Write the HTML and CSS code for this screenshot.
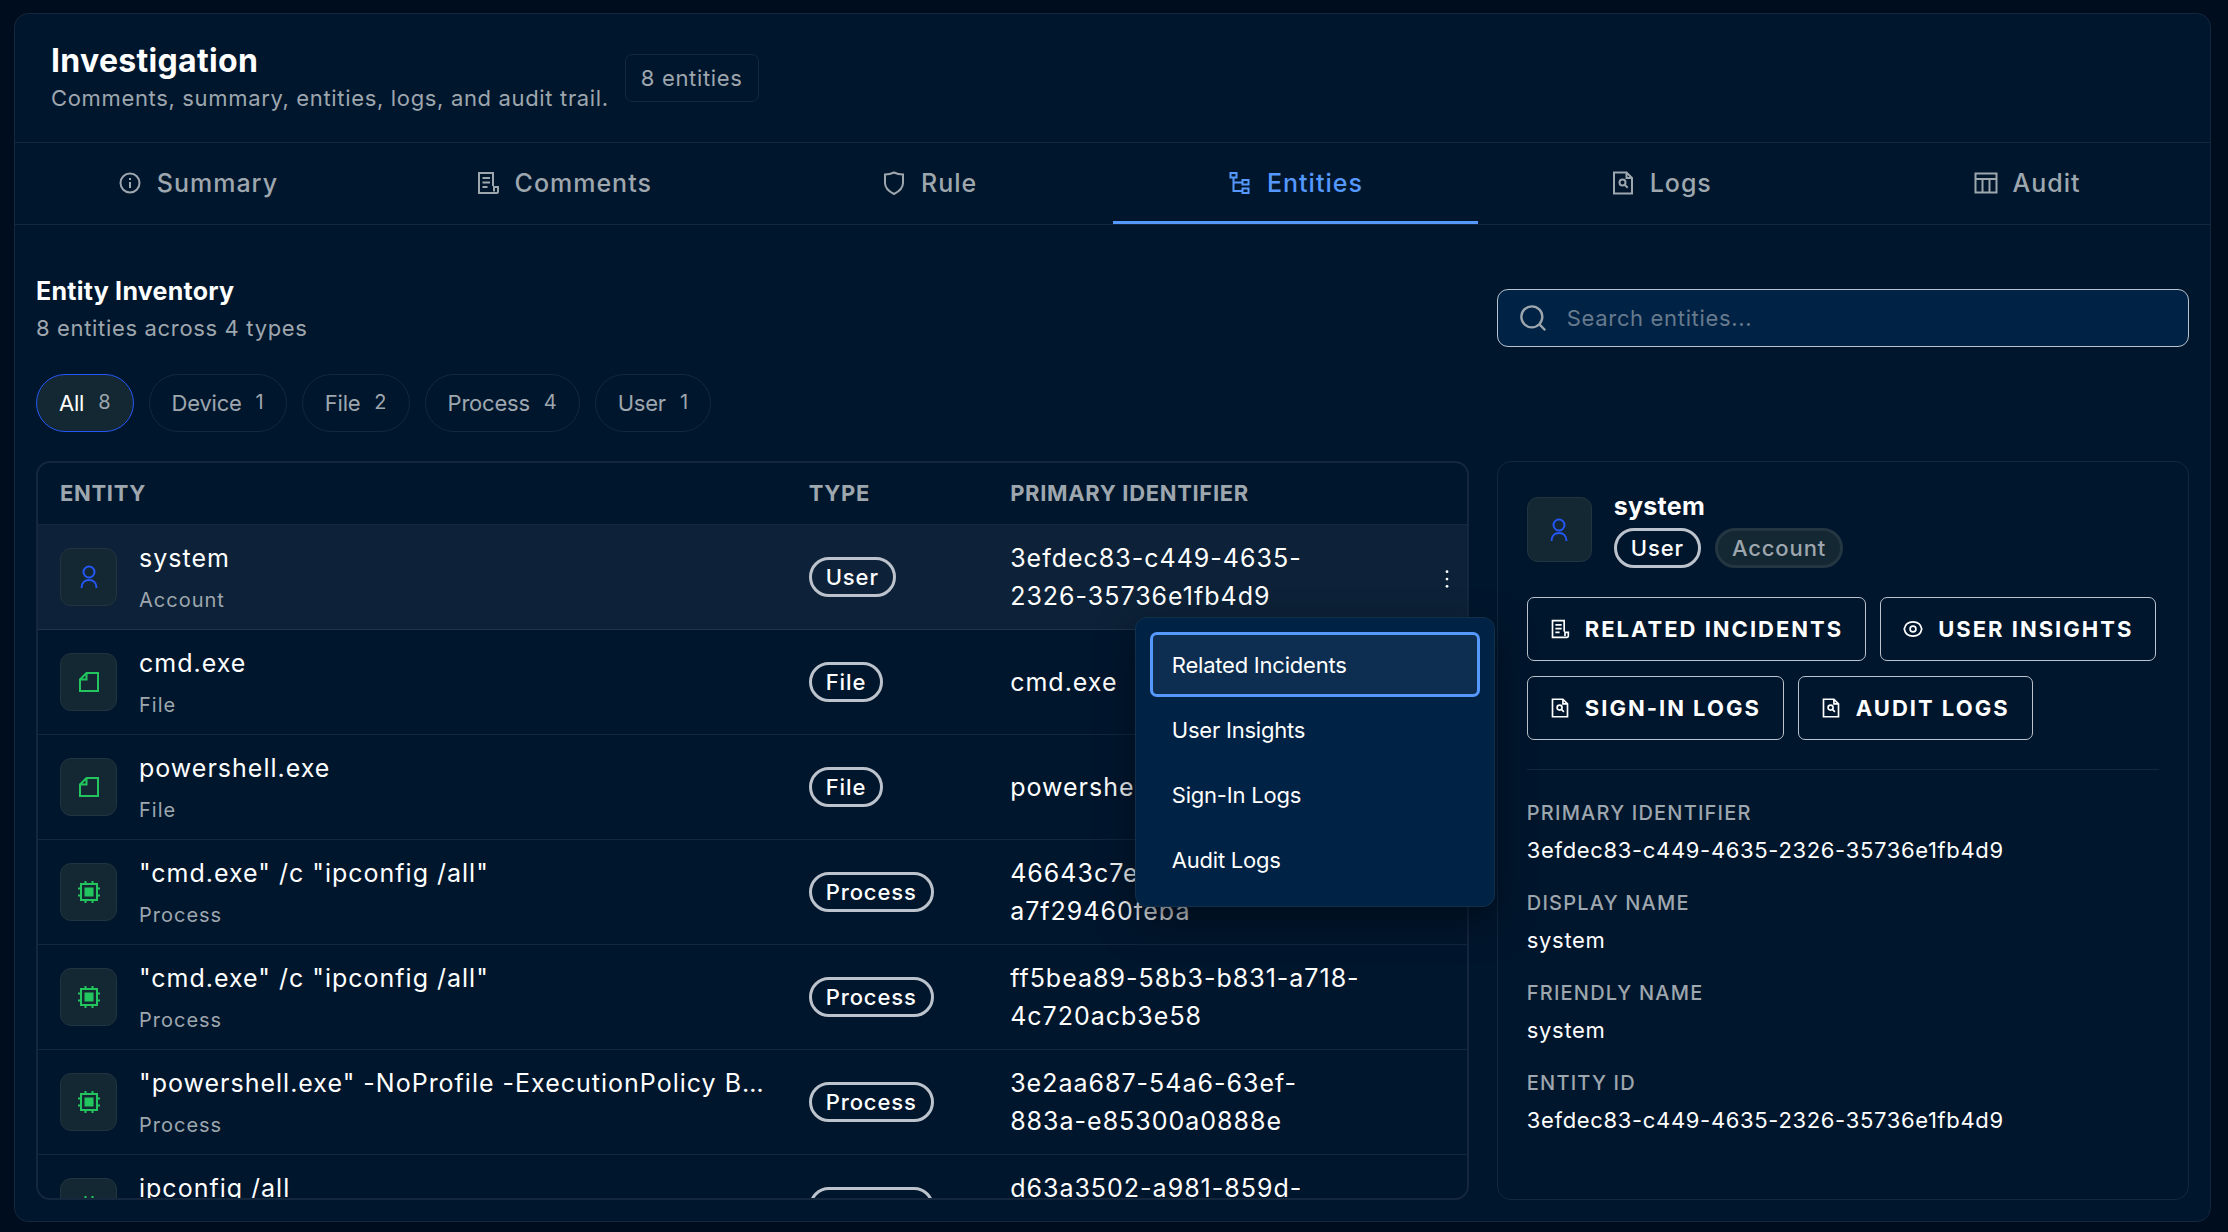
FILE: index.html
```html
<!DOCTYPE html>
<html lang="en">
  <head>
    <meta charset="UTF-8">
    <meta name="viewport" content="width=device-width, initial-scale=1.0">
    <title>Investigation</title>
    <link rel="stylesheet" href="styles.css">
  </head>
  <body>
    <!-- Icons -->
    <svg class="sprite" aria-hidden="true">
      <symbol id="i-info" viewBox="0 0 24 24">
        <circle cx="12" cy="12" r="9.5"/><path d="M12 11v6M12 7v2"/>
      </symbol>
      <symbol id="i-note" viewBox="0 0 24 24">
        <path d="M17 15V2H3v20h17.500a1.500 1.500 0 0 0 1.500-1.500V16h-4v4.500M6.500 7h7.500M6.500 11.500h7.500M6.500 16h5"/>
      </symbol>
      <symbol id="i-shield" viewBox="0 0 24 24">
        <path d="M12 1.500c3 1.500 6 2 9 2V12c0 5-4 8.500-9 11-5-2.500-9-6-9-11V3.500c3 0 6-.500 9-2z"/>
      </symbol>
      <symbol id="i-tree" viewBox="0 0 24 24">
        <path d="M2.500 2h6v4.500h-6zM14.500 9h6v4.500h-6zM14.500 17.500h6V22h-6zM5.500 6.500V20h9M5.500 11.500h9"/>
      </symbol>
      <symbol id="i-log" viewBox="0 0 24 24">
        <path d="M3 1.500h12.500L21 7v15.500H3zM15.500 1.500V7H21"/><circle cx="11.500" cy="11.500" r="3"/><path d="M13.700 13.700l3 3"/>
      </symbol>
      <symbol id="i-table" viewBox="0 0 24 24">
        <path d="M1.500 2.500h21v19h-21zM1.500 8h21M8.500 8v13.500M15.500 8v13.500"/>
      </symbol>
      <symbol id="i-search" viewBox="0 0 24 24">
        <circle cx="11" cy="11" r="9"/><path d="M17.500 17.500L22.500 22.500"/>
      </symbol>
      <symbol id="i-user" viewBox="0 0 24 24">
        <circle cx="12" cy="7" r="5.500"/><path d="M4.500 23c0-5 3-8 7.500-8s7.500 3 7.500 8"/>
      </symbol>
      <symbol id="i-file" viewBox="0 0 24 24">
        <path d="M9.500 3H21v18H3V9.500zM9.500 3v6.500H3"/>
      </symbol>
      <symbol id="i-cpu" viewBox="0 0 24 24">
        <path d="M4 4h16v16H4zM8.500 1v3M15.500 1v3M8.500 20v3M15.500 20v3M1 8.500h3M1 15.500h3M20 8.500h3M20 15.500h3"/>
        <path class="solid" d="M8.500 8.500h7v7h-7z"/>
      </symbol>
      <symbol id="i-eye" viewBox="0 0 24 24">
        <path d="M1.500 12c1-5 5-8.500 10.500-8.500S21.500 7 22.500 12c-1 5-5 8.500-10.500 8.500S2.500 17 1.500 12z"/><circle cx="12" cy="12" r="3.500"/>
      </symbol>
      <symbol id="i-dots" viewBox="0 0 24 24">
        <g class="dots"><circle cx="12" cy="4" r="1.500"/><circle cx="12" cy="12" r="1.500"/><circle cx="12" cy="20" r="1.500"/></g>
      </symbol>
    </svg>

    <main class="panel">
      <header class="panel-header">
        <div class="panel-title">
          <h1>Investigation</h1>
          <p class="muted">Comments, summary, entities, logs, and audit trail.</p>
        </div>
        <span class="count-badge">8 entities</span>
      </header>

      <nav class="tabs" role="tablist">
        <button class="tab" role="tab"><svg class="icon"><use href="#i-info"/></svg>Summary</button>
        <button class="tab" role="tab"><svg class="icon"><use href="#i-note"/></svg>Comments</button>
        <button class="tab" role="tab"><svg class="icon"><use href="#i-shield"/></svg>Rule</button>
        <button class="tab active" role="tab" aria-selected="true"><svg class="icon"><use href="#i-tree"/></svg>Entities</button>
        <button class="tab" role="tab"><svg class="icon"><use href="#i-log"/></svg>Logs</button>
        <button class="tab" role="tab"><svg class="icon"><use href="#i-table"/></svg>Audit</button>
      </nav>

      <section class="content">
        <div class="toolbar columns">
          <div>
            <h2>Entity Inventory</h2>
            <p class="muted">8 entities across 4 types</p>
          </div>
          <label class="search">
            <svg class="icon"><use href="#i-search"/></svg>
            <input type="text" placeholder="Search entities..." aria-label="Search entities">
          </label>
        </div>

        <div class="filters">
          <button class="chip active">All <span>8</span></button>
          <button class="chip">Device <span>1</span></button>
          <button class="chip">File <span>2</span></button>
          <button class="chip">Process <span>4</span></button>
          <button class="chip">User <span>1</span></button>
        </div>

        <div class="columns body-columns">
          <div class="inventory">
            <div class="table-wrap">
              <table>
                <colgroup>
                  <col class="col-entity"><col class="col-type"><col class="col-id"><col>
                </colgroup>
                <thead>
                  <tr><th>Entity</th><th>Type</th><th>Primary Identifier</th><th></th></tr>
                </thead>
                <tbody>
                  <tr class="selected">
                    <td><div class="entity"><span class="tile user"><svg class="icon"><use href="#i-user"/></svg></span><div><div class="name">system</div><div class="kind">Account</div></div></div></td>
                    <td><span class="pill">User</span></td>
                    <td>3efdec83-c449-4635-2326-35736e1fb4d9</td>
                    <td class="actions"><button class="kebab" aria-label="Entity actions"><svg class="icon"><use href="#i-dots"/></svg></button></td>
                  </tr>
                  <tr>
                    <td><div class="entity"><span class="tile"><svg class="icon"><use href="#i-file"/></svg></span><div><div class="name">cmd.exe</div><div class="kind">File</div></div></div></td>
                    <td><span class="pill">File</span></td>
                    <td>cmd.exe</td>
                    <td></td>
                  </tr>
                  <tr>
                    <td><div class="entity"><span class="tile"><svg class="icon"><use href="#i-file"/></svg></span><div><div class="name">powershell.exe</div><div class="kind">File</div></div></div></td>
                    <td><span class="pill">File</span></td>
                    <td>powershell.exe</td>
                    <td></td>
                  </tr>
                  <tr>
                    <td><div class="entity"><span class="tile"><svg class="icon"><use href="#i-cpu"/></svg></span><div><div class="name">"cmd.exe" /c "ipconfig /all"</div><div class="kind">Process</div></div></div></td>
                    <td><span class="pill">Process</span></td>
                    <td>46643c7e-1f1b-b131-a711-a7f29460feba</td>
                    <td></td>
                  </tr>
                  <tr>
                    <td><div class="entity"><span class="tile"><svg class="icon"><use href="#i-cpu"/></svg></span><div><div class="name">"cmd.exe" /c "ipconfig /all"</div><div class="kind">Process</div></div></div></td>
                    <td><span class="pill">Process</span></td>
                    <td>ff5bea89-58b3-b831-a718-4c720acb3e58</td>
                    <td></td>
                  </tr>
                  <tr>
                    <td><div class="entity"><span class="tile"><svg class="icon"><use href="#i-cpu"/></svg></span><div><div class="name">"powershell.exe" -NoProfile -ExecutionPolicy Bypass</div><div class="kind">Process</div></div></div></td>
                    <td><span class="pill">Process</span></td>
                    <td>3e2aa687-54a6-63ef-883a-e85300a0888e</td>
                    <td></td>
                  </tr>
                  <tr>
                    <td><div class="entity"><span class="tile"><svg class="icon"><use href="#i-cpu"/></svg></span><div><div class="name">ipconfig /all</div><div class="kind">Process</div></div></div></td>
                    <td><span class="pill">Process</span></td>
                    <td>d63a3502-a981-859d-8f20-6b0c94e2d7a4</td>
                    <td></td>
                  </tr>
                </tbody>
              </table>
            </div>

            <!-- Row action menu -->
            <div class="menu" role="menu">
              <button class="focused" role="menuitem">Related Incidents</button>
              <button role="menuitem">User Insights</button>
              <button role="menuitem">Sign-In Logs</button>
              <button role="menuitem">Audit Logs</button>
            </div>
          </div>

          <aside class="detail">
            <div class="detail-header">
              <span class="tile user large"><svg class="icon"><use href="#i-user"/></svg></span>
              <div>
                <h3>system</h3>
                <div class="pills"><span class="pill">User</span><span class="pill subtle">Account</span></div>
              </div>
            </div>
            <div class="detail-actions">
              <button><svg class="icon"><use href="#i-note"/></svg>Related Incidents</button>
              <button><svg class="icon"><use href="#i-eye"/></svg>User Insights</button>
              <button><svg class="icon"><use href="#i-log"/></svg>Sign-In Logs</button>
              <button><svg class="icon"><use href="#i-log"/></svg>Audit Logs</button>
            </div>
            <dl>
              <div><dt>Primary Identifier</dt><dd>3efdec83-c449-4635-2326-35736e1fb4d9</dd></div>
              <div><dt>Display Name</dt><dd>system</dd></div>
              <div><dt>Friendly Name</dt><dd>system</dd></div>
              <div><dt>Entity ID</dt><dd>3efdec83-c449-4635-2326-35736e1fb4d9</dd></div>
            </dl>
          </aside>
        </div>
      </section>
    </main>
  </body>
</html>
```
FILE: styles.css
```css
:root {
  --bg: #000d1f;
  --panel: #00162d;
  --raised: #002244;
  --tile: #142833;
  --line: #14273d;
  --text: #ffffff;
  --muted: #9ea6ae;
  --outline: #bcc3cc;
  --accent: #5599ff;
  --blue: #2457f5;
  --green: #22c55e;
}
* {
  box-sizing: border-box;
}
body {
  margin: 0;
  height: 100vh;
  padding: 13px 17px 10px 14px;
  display: flex;
  background-color: var(--bg);
  color: var(--text);
  font-family: Inter, "Liberation Sans", sans-serif;
  font-size: 22px;
  letter-spacing: 0.03em;
}
h1, h2, h3, p, dl, dd {
  margin: 0;
}
h1, h2, h3 {
  font-weight: 700;
  letter-spacing: 0.01em;
}
button, input {
  font: inherit;
  letter-spacing: inherit;
  color: inherit;
  background: none;
  border: none;
  padding: 0;
}
button {
  cursor: pointer;
}
.sprite {
  position: absolute;
  width: 0;
  height: 0;
}
.icon {
  width: 24px;
  height: 24px;
  flex-shrink: 0;
  fill: none;
  stroke: currentColor;
  stroke-width: 2;
}
.solid {
  fill: currentColor;
}
.dots {
  fill: currentColor;
  stroke: none;
}
.muted {
  color: var(--muted);
  line-height: 32px;
}

/* Panel */
.panel {
  flex: 1;
  min-width: 0;
  display: flex;
  flex-direction: column;
  background-color: var(--panel);
  border: 1px solid var(--line);
  border-radius: 14px;
}
.panel-header {
  display: flex;
  align-items: center;
  gap: 16px;
  height: 129px;
  padding: 0 36px;
  border-bottom: 1px solid var(--line);
}
.panel-title {
  padding-bottom: 3px;
}
h1 {
  font-size: 32px;
  line-height: 42px;
}
.count-badge {
  padding: 0 15px;
  line-height: 46px;
  color: var(--muted);
  border: 1px solid var(--line);
  border-radius: 7px;
}

/* Tabs */
.tabs {
  display: grid;
  grid-template-columns: repeat(6, 1fr);
  border-bottom: 1px solid var(--line);
}
.tab {
  display: flex;
  align-items: center;
  justify-content: center;
  gap: 15px;
  height: 81px;
  padding-top: 2px;
  font-size: 25px;
  font-weight: 500;
  letter-spacing: 1px;
  color: var(--muted);
  border-bottom: 3px solid transparent;
}
.tab.active {
  color: var(--accent);
  border-bottom-color: var(--accent);
}

/* Content */
.content {
  flex: 1;
  min-height: 0;
  display: flex;
  flex-direction: column;
  padding: 47px 21px 21px;
}
.columns {
  display: grid;
  grid-template-columns: minmax(0, 2.07fr) minmax(0, 1fr);
  gap: 28px;
}
.toolbar {
  align-items: end;
}
h2 {
  font-size: 25px;
  line-height: 38px;
}
.toolbar .muted {
  line-height: 37px;
}
.search {
  display: flex;
  align-items: center;
  gap: 20px;
  height: 58px;
  padding: 0 21px;
  color: var(--muted);
  background-color: var(--raised);
  border: 1px solid var(--outline);
  border-radius: 11px;
}
.search .icon {
  width: 28px;
  height: 28px;
}
.search input {
  flex: 1;
  min-width: 0;
  outline: none;
  color: var(--text);
}
.search input::placeholder {
  color: #677a8e;
}
.filters {
  display: flex;
  gap: 15px;
  margin: 27px 0 29px;
}
.chip {
  display: flex;
  align-items: center;
  gap: 14px;
  height: 58px;
  padding: 0 22px;
  letter-spacing: -0.01em;
  color: var(--muted);
  border: 1px solid var(--line);
  border-radius: 29px;
}
.chip span {
  font-size: 20px;
  letter-spacing: 0;
  color: var(--muted);
  padding-bottom: 2px;
}
.chip.active {
  color: var(--text);
  background-color: var(--tile);
  border-color: var(--blue);
}
.body-columns {
  flex: 1;
  min-height: 0;
}

/* Entity table */
.inventory {
  position: relative;
  min-height: 0;
}
.table-wrap {
  height: 100%;
  overflow-y: auto;
  scrollbar-width: none;
  border: 2px solid var(--line);
  border-radius: 14px;
}
table {
  width: 100%;
  table-layout: fixed;
  border-collapse: separate;
  border-spacing: 0;
}
.col-entity {
  width: 52.4%;
}
.col-type {
  width: 14.1%;
}
.col-id {
  width: 28%;
}
th {
  height: 62px;
  padding: 0 22px 2px;
  text-align: left;
  text-transform: uppercase;
  font-weight: 700;
  color: var(--muted);
  border-bottom: 1px solid var(--line);
}
td {
  height: 105px;
  padding: 13px 22px 14px;
  font-size: 25px;
  line-height: 38px;
  letter-spacing: 1px;
  border-bottom: 1px solid var(--line);
}
tr.selected td {
  background-color: #0d2238;
  border-bottom-color: #20344a;
}
.entity {
  display: flex;
  align-items: center;
  gap: 22px;
  padding-top: 1px;
}
.entity > div {
  min-width: 0;
}
.name {
  overflow: hidden;
  white-space: nowrap;
  text-overflow: ellipsis;
}
.kind {
  margin-top: 8px;
  font-size: 20px;
  line-height: 30px;
  color: var(--muted);
}
.tile {
  display: flex;
  align-items: center;
  justify-content: center;
  flex-shrink: 0;
  width: 57px;
  height: 58px;
  color: var(--green);
  background-color: var(--tile);
  border: 1px solid #21343f;
  border-radius: 11px;
}
.tile.user {
  color: var(--blue);
}
.tile.large {
  width: 65px;
  height: 65px;
}
.pill {
  display: inline-block;
  vertical-align: middle;
  padding: 0 14px;
  font-size: 22px;
  font-weight: 500;
  line-height: 34px;
  letter-spacing: 0.04em;
  border: 3px solid var(--outline);
  border-radius: 20px;
}
.pill.subtle {
  color: var(--muted);
  background-color: var(--tile);
  border-color: #233641;
}
td.actions {
  padding-left: 9px;
  padding-right: 9px;
  text-align: right;
}
.kebab {
  display: inline-flex;
  vertical-align: middle;
}
.kebab .icon {
  width: 22px;
  height: 22px;
}

/* Row action menu */
.menu {
  position: absolute;
  top: 156px;
  right: -26px;
  width: 360px;
  padding: 14px;
  display: flex;
  flex-direction: column;
  background-color: var(--raised);
  border: 1px solid #12304b;
  border-radius: 12px;
  box-shadow: 0 14px 36px rgba(0, 10, 20, 0.7);
}
.menu button {
  height: 65px;
  padding: 0 19px;
  text-align: left;
  letter-spacing: -0.01em;
  border: 3px solid transparent;
  border-radius: 7px;
}
.menu .focused {
  background-color: #0d2e50;
  border-color: var(--accent);
}

/* Detail panel */
.detail {
  padding: 29px;
  border: 1px solid var(--line);
  border-radius: 14px;
}
.detail-header {
  display: flex;
  align-items: center;
  gap: 22px;
}
h3 {
  font-size: 25px;
  line-height: 30px;
}
.pills {
  display: flex;
  gap: 14px;
  margin-top: 7px;
}
.detail-actions {
  display: flex;
  flex-wrap: wrap;
  gap: 15px 14px;
  padding: 29px 0;
  border-bottom: 1px solid var(--line);
}
.detail-actions button {
  display: flex;
  align-items: center;
  gap: 15px;
  height: 64px;
  padding: 0 22px;
  font-weight: 700;
  letter-spacing: 2px;
  text-transform: uppercase;
  border: 1px solid var(--outline);
  border-radius: 7px;
}
.detail-actions .icon {
  width: 20px;
  height: 20px;
}
dl {
  display: flex;
  flex-direction: column;
  gap: 21px;
  padding-top: 28px;
}
dt {
  font-size: 20px;
  font-weight: 500;
  line-height: 30px;
  letter-spacing: 0.06em;
  text-transform: uppercase;
  color: var(--muted);
}
dd {
  margin-top: 6px;
  line-height: 33px;
}
```
